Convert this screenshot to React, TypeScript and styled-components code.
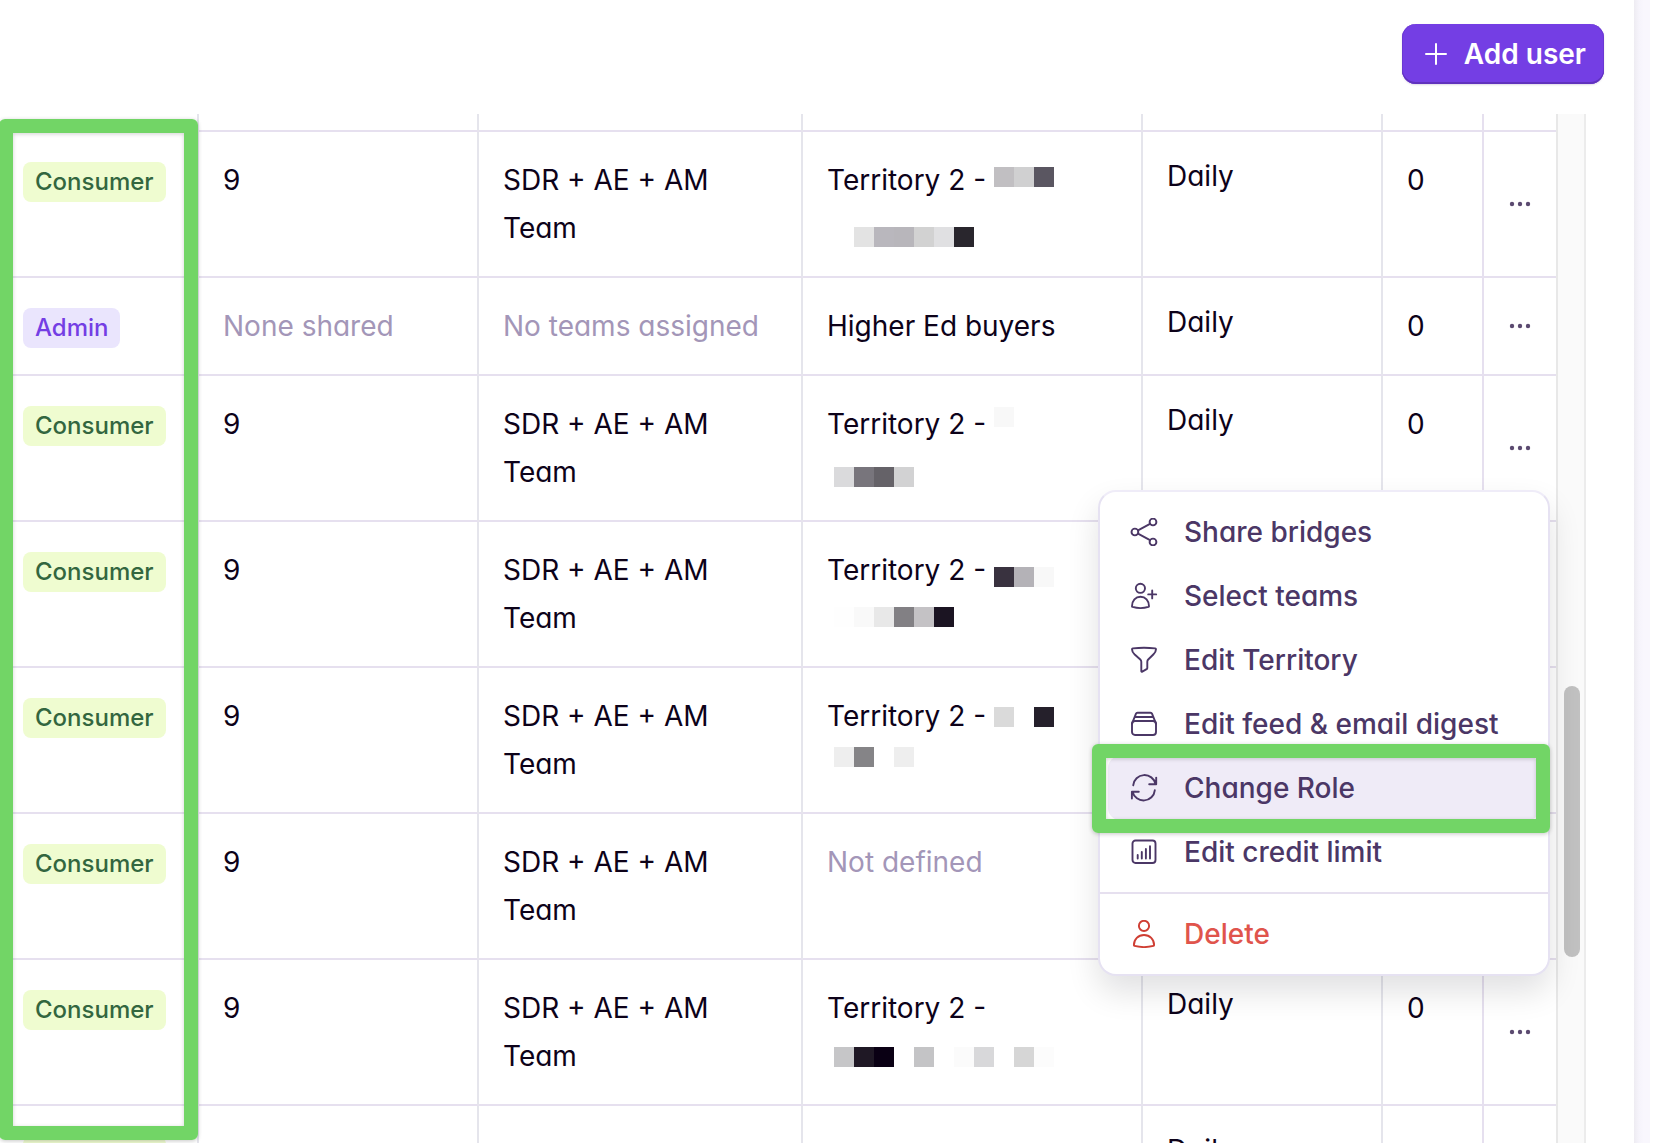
import React from "react";
import styled, { createGlobalStyle } from "styled-components";

const color = {
  ink: "#0d0219",
  muted: "#a396b8",
  menuInk: "#4b3766",
  danger: "#e0544c",
  dangerIcon: "#cf3e33",
  rowLine: "#e6e0ef",
  colLine: "#e5e5ec",
  purple: "#743ee4",
  green: "#72d566",
};

const GlobalStyle = createGlobalStyle`
  *, *::before, *::after { box-sizing: border-box; }
  html, body, #root { height: 100%; }
  body {
    margin: 0;
    background: #fff;
    color: ${color.ink};
    font-family: Inter, "Liberation Sans", sans-serif;
    font-feature-settings: "cv11";
    font-size: 28px;
    line-height: 48px;
    overflow: hidden;
  }
  button { font: inherit; font-feature-settings: inherit; border: 0; background: none; padding: 0; cursor: pointer; }
`;

const Shell = styled.div`
  display: flex;
  height: 100%;
  padding-right: 16px;
`;

const Panel = styled.main`
  display: flex;
  flex-direction: column;
  flex: 1;
  min-width: 0;
`;

const Gutter = styled.div`
  width: 16px;
  background: linear-gradient(to right, #eeecf2, #f6f4fb 5px, #f9f7fd 10px);
`;

const Header = styled.header`
  display: flex;
  justify-content: flex-end;
  padding: 24px 30px 30px;
`;

const AddButton = styled.button`
  display: flex;
  align-items: center;
  gap: 16px;
  height: 60px;
  padding: 0 18px 0 22px;
  border-radius: 14px;
  background: ${color.purple};
  box-shadow: inset 0 -2px 0 #6032bd, inset -1px 0 0 #6a38d2, inset 1px 0 0 #6a38d2, 0 1px 2px rgba(40, 10, 90, 0.15);
  color: #fff;
  font-weight: 600;
`;

const Scroller = styled.section`
  display: flex;
  flex: 1;
  min-height: 0;
  margin-right: 48px;
  position: relative;
`;

const TableArea = styled.div`
  flex: 1;
  min-width: 0;
`;

const Track = styled.div`
  width: 30px;
  padding: 572px 4px 0 6px;
  background: #fafafa;
  border-left: 2px solid #e8e8e8;
  border-right: 2px solid #ececec;
`;

const Thumb = styled.div`
  width: 16px;
  height: 271px;
  border-radius: 8px;
  background: #c1c1c1;
`;

const Table = styled.table`
  width: 100%;
  table-layout: fixed;
  border-collapse: separate;
  border-spacing: 0;
`;

const Col = styled.col<{ $w?: number }>`
  width: ${(p) => (p.$w ? `${p.$w}px` : "auto")};
`;

const Cell = styled.td<{ $line?: string }>`
  padding: 24px;
  vertical-align: top;
  border-right: 2px solid ${(p) => p.$line ?? color.colLine};
  border-bottom: 2px solid ${color.rowLine};
`;

const StubCell = styled(Cell)`
  height: 18px;
  padding: 0;
`;

const RoleCell = styled(Cell)`
  padding: 30px 0 0 23px;
`;

const FrequencyCell = styled(Cell)`
  line-height: 40px;
`;

const ActionCell = styled(Cell)`
  position: relative;
  padding: 0;
  vertical-align: middle;
  border-right: 0;
`;

const StubEnd = styled(StubCell)`
  border-right: 0;
`;

const Badge = styled.span<{ $admin: boolean }>`
  display: block;
  width: fit-content;
  padding: 0 12px;
  border-radius: 8px;
  background: ${(p) => (p.$admin ? "#eae5fd" : "#effcd0")};
  color: ${(p) => (p.$admin ? color.purple : "#33663f")};
  font-size: 24px;
  font-weight: 500;
  line-height: 40px;
`;

const Muted = styled.span`
  color: ${color.muted};
  white-space: nowrap;
`;

const DotsButton = styled.button`
  display: flex;
  margin: 0 auto;
  color: #5b4a70;
`;

const Line = styled.div`
  display: flex;
  height: 48px;
  white-space: nowrap;
`;

const TerritoryName = styled.span`
  min-width: 167px;
`;

const Mosaic = styled.span<{ $top: number; $left?: number }>`
  display: flex;
  height: 20px;
  margin-top: ${(p) => p.$top}px;
  margin-left: ${(p) => p.$left ?? 0}px;
`;

const Tile = styled.span<{ $fill: string }>`
  width: 20px;
  background: ${(p) => p.$fill};
`;

const Menu = styled.div`
  position: absolute;
  z-index: 2;
  top: 114px;
  right: 6px;
  width: 452px;
  border: 2px solid #e6e2f2;
  border-top-color: #efecf8;
  border-radius: 18px;
  background: #fff;
  box-shadow: 0 16px 32px rgba(10, 5, 20, 0.12);
`;

const MenuGroup = styled.div`
  padding: 8px;

  & + & {
    border-top: 2px solid ${color.rowLine};
  }
`;

const MenuItem = styled.button<{ $active?: boolean; $danger?: boolean }>`
  position: relative;
  display: flex;
  align-items: center;
  gap: 26px;
  width: 100%;
  height: 64px;
  padding-left: 22px;
  border-radius: 12px;
  background: ${(p) => (p.$active ? "#efebf7" : "transparent")};
  color: ${(p) => (p.$danger ? color.danger : color.menuInk)};
  font-weight: 500;
  white-space: nowrap;

  svg {
    color: ${(p) => (p.$danger ? color.dangerIcon : color.menuInk)};
  }
`;

const Highlight = styled.div`
  position: absolute;
  z-index: 1;
  border: 14px solid ${color.green};
  border-radius: 6px;
  box-shadow: 0 1px 4px rgba(0, 0, 0, 0.22), inset 0 1px 4px rgba(0, 0, 0, 0.18);
  pointer-events: none;
`;

const RoleHighlight = styled(Highlight)`
  top: 5px;
  bottom: 3px;
  left: -1px;
  width: 199px;
`;

const ItemHighlight = styled(Highlight)`
  inset: -12px -10px -13px -16px;
`;

const Icon = ({ children }: { children: React.ReactNode }) => (
  <svg
    width="28"
    height="28"
    viewBox="0 0 28 28"
    fill="none"
    stroke="currentColor"
    strokeWidth="1.9"
    strokeLinecap="round"
    strokeLinejoin="round"
    aria-hidden="true"
  >
    {children}
  </svg>
);

const ShareIcon = () => (
  <Icon>
    <circle cx="4.9" cy="14" r="3.4" />
    <circle cx="23" cy="4" r="3.4" />
    <circle cx="23" cy="24" r="3.4" />
    <path d="M8 12.3 20 5.8M8 15.7l12 6.5" />
  </Icon>
);

const TeamIcon = () => (
  <Icon>
    <circle cx="10.4" cy="6.3" r="4.6" />
    <path d="M2 24.3C2 18.4 5.6 14.8 10.5 14.8s8.5 3.6 8.5 9.5c0 .3-.2.5-.5.6-5 1.5-11 1.5-16 0a.7.7 0 0 1-.5-.6Z" />
    <path d="M22.2 8.4v8M18.2 12.4h8" />
  </Icon>
);

const FunnelIcon = () => (
  <Icon>
    <path d="M2 3.2c0-.5.4-.7.9-.8 7-.8 15.2-.8 22.2 0 .5.1.9.3.9.8 0 2.200-1 3.600-2.700 5.300l-5.100 5c-.7.7-.9 1.300-.9 2.300v6.200c0 .6-.2.9-.7 1.200l-4.300 2.400c-.6.3-1 .1-1-.6v-9.200c0-1-.3-1.600-1-2.300l-5.600-5C3 6.900 2 5.400 2 3.200Z" />
  </Icon>
);

const StackIcon = () => (
  <Icon>
    <path d="M7.5 2.7h13c.8 0 1.300.3 1.500 1l4 10M7.500 2.700c-.8 0-1.300.3-1.500 1L2 13.700M4.800 7h18.400" />
    <rect x="2" y="11" width="24" height="14" rx="3" />
  </Icon>
);

const RefreshIcon = () => (
  <Icon>
    <path d="M3.2 11.3A11.3 11.3 0 0 1 25.5 10M26.2 3.6v6.7h-7" />
    <path d="M24.8 16.3A11.3 11.3 0 0 1 2.6 17.9M1.9 24.5v-6.8h6.9" />
  </Icon>
);

const ChartIcon = () => (
  <Icon>
    <rect x="2.5" y="2.5" width="23" height="22.5" rx="3" />
    <path d="M7.7 20.5v-3.6M11.8 20.5v-6.5M15.9 20.5v-9.5M20 20.5V8.3" />
  </Icon>
);

const PersonIcon = () => (
  <Icon>
    <circle cx="14" cy="5.9" r="5.1" />
    <path d="M3.9 25.1C3.9 19.3 8.2 15 14 15s10.1 4.3 10.1 10.1c0 .4-.2.7-.6.8-6 1.5-13 1.5-19 0a.8.8 0 0 1-.6-.8Z" />
  </Icon>
);

const PlusIcon = () => (
  <svg width="24" height="24" viewBox="0 0 24 24" stroke="#fff" strokeWidth="2" strokeLinecap="round" aria-hidden="true">
    <path d="M12 2v20M2 12h20" />
  </svg>
);

const DotsIcon = () => (
  <svg width="28" height="28" viewBox="0 0 28 28" fill="currentColor" aria-hidden="true">
    <circle cx="6" cy="14" r="2.2" />
    <circle cx="14" cy="14" r="2.2" />
    <circle cx="22" cy="14" r="2.2" />
  </svg>
);

type Tiles = { top: number; left?: number; fills: string[] };

type User = {
  role: "Consumer" | "Admin";
  bridges?: string;
  teams?: string;
  territory?: string;
  first?: Tiles;
  second?: Tiles;
  frequency?: string;
  credits?: string;
  menuOpen?: boolean;
};

const none = "transparent";
const team = "SDR + AE + AM Team";

const users: User[] = [
  {
    role: "Consumer",
    bridges: "9",
    teams: team,
    territory: "Territory 2 -",
    first: { top: 11, fills: ["#c1bfc2", "#d0d0d1", "#5a5661"] },
    second: { top: 23, left: 27, fills: ["#e3e3e3", "#b9b7bd", "#b8b6bb", "#d2d2d2", "#e0e0e2", "#29262d"] },
    frequency: "Daily",
    credits: "0",
  },
  { role: "Admin", territory: "Higher Ed buyers", frequency: "Daily", credits: "0" },
  {
    role: "Consumer",
    bridges: "9",
    teams: team,
    territory: "Territory 2 -",
    first: { top: 7, fills: ["#f8f8f8"] },
    second: { top: 19, left: 7, fills: ["#dadadc", "#78757c", "#656268", "#d2d2d3"] },
    frequency: "Daily",
    credits: "0",
    menuOpen: true,
  },
  {
    role: "Consumer",
    bridges: "9",
    teams: team,
    territory: "Territory 2 -",
    first: { top: 21, fills: ["#39323f", "#b4b2b7", "#f8f8f8"] },
    second: { top: 13, left: 7, fills: ["#fefefe", "#f9f9f9", "#e8e8e8", "#828084", "#c4c2c5", "#1b1422"] },
  },
  {
    role: "Consumer",
    bridges: "9",
    teams: team,
    territory: "Territory 2 -",
    first: { top: 15, fills: ["#dadada", none, "#25202b"] },
    second: { top: 7, left: 7, fills: ["#eeeeee", "#858487", none, "#eeeeee"] },
  },
  { role: "Consumer", bridges: "9", teams: team },
  {
    role: "Consumer",
    bridges: "9",
    teams: team,
    territory: "Territory 2 -",
    second: {
      top: 15,
      left: 7,
      fills: ["#c6c6c8", "#1f1825", "#0a0014", none, "#c4c4c6", none, "#fbfbfb", "#d8d8da", none, "#d6d6d6", "#fcfcfc"],
    },
    frequency: "Daily",
    credits: "0",
  },
];

const TileRow = ({ tiles }: { tiles: Tiles }) => (
  <Mosaic $top={tiles.top} $left={tiles.left}>
    {tiles.fills.map((fill, i) => (
      <Tile key={i} $fill={fill} />
    ))}
  </Mosaic>
);

const menuItems = [
  { label: "Share bridges", Glyph: ShareIcon },
  { label: "Select teams", Glyph: TeamIcon },
  { label: "Edit Territory", Glyph: FunnelIcon },
  { label: "Edit feed & email digest", Glyph: StackIcon },
  { label: "Change Role", Glyph: RefreshIcon, active: true },
  { label: "Edit credit limit", Glyph: ChartIcon },
];

const UserMenu = () => (
  <Menu role="menu">
    <MenuGroup>
      {menuItems.map(({ label, Glyph, active }) => (
        <MenuItem key={label} type="button" role="menuitem" $active={active}>
          <Glyph />
          {label}
          {active && <ItemHighlight />}
        </MenuItem>
      ))}
    </MenuGroup>
    <MenuGroup>
      <MenuItem type="button" role="menuitem" $danger>
        <PersonIcon />
        Delete
      </MenuItem>
    </MenuGroup>
  </Menu>
);

const UserRow = ({ user }: { user: User }) => (
  <tr>
    <RoleCell>
      <Badge $admin={user.role === "Admin"}>{user.role}</Badge>
    </RoleCell>
    <Cell>{user.bridges ?? <Muted>None shared</Muted>}</Cell>
    <Cell>{user.teams ?? <Muted>No teams assigned</Muted>}</Cell>
    <Cell>
      {user.territory ? (
        <Line>
          <TerritoryName>{user.territory}</TerritoryName>
          {user.first && <TileRow tiles={user.first} />}
        </Line>
      ) : (
        <Muted>Not defined</Muted>
      )}
      {user.second && (
        <Line>
          <TileRow tiles={user.second} />
        </Line>
      )}
    </Cell>
    <FrequencyCell>{user.frequency}</FrequencyCell>
    <Cell $line={color.rowLine}>{user.credits}</Cell>
    <ActionCell>
      {user.frequency && (
        <DotsButton type="button" aria-label="User actions">
          <DotsIcon />
        </DotsButton>
      )}
      {user.menuOpen && <UserMenu />}
    </ActionCell>
  </tr>
);

export default function App() {
  return (
    <>
      <GlobalStyle />
      <Shell>
        <Panel>
          <Header>
            <AddButton type="button">
              <PlusIcon />
              Add user
            </AddButton>
          </Header>
          <Scroller>
            <TableArea>
              <Table aria-label="Users">
                <colgroup>
                  <Col $w={199} />
                  <Col $w={280} />
                  <Col $w={324} />
                  <Col />
                  <Col $w={240} />
                  <Col $w={101} />
                  <Col $w={72} />
                </colgroup>
                <tbody>
                  <tr>
                    <StubCell />
                    <StubCell />
                    <StubCell />
                    <StubCell />
                    <StubCell />
                    <StubCell $line={color.rowLine} />
                    <StubEnd />
                  </tr>
                  {users.map((user, i) => (
                    <UserRow key={i} user={user} />
                  ))}
                  <tr>
                    <RoleCell>
                      <Badge $admin={false}>Consumer</Badge>
                    </RoleCell>
                    <Cell />
                    <Cell />
                    <Cell />
                    <FrequencyCell>Daily</FrequencyCell>
                    <Cell $line={color.rowLine} />
                    <ActionCell />
                  </tr>
                </tbody>
              </Table>
            </TableArea>
            <Track>
              <Thumb />
            </Track>
            <RoleHighlight />
          </Scroller>
        </Panel>
        <Gutter />
      </Shell>
    </>
  );
}
